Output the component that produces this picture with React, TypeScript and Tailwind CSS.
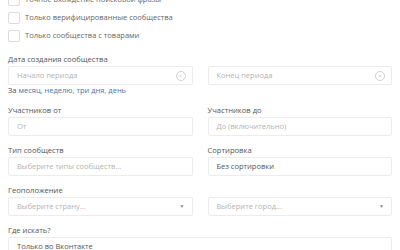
const Checkbox = ({ label }: { label: string }) => (
  <label className="flex h-[12px] items-center gap-[5px]">
    <span className="h-[12px] w-[12px] shrink-0 rounded-[2px] border border-[#dcdcdc] bg-white" />
    <span className="text-[7.5px] text-[#666]">{label}</span>
  </label>
);

const Field = ({
  label,
  placeholder,
  value,
  clear,
  select,
}: {
  label?: string;
  placeholder?: string;
  value?: string;
  clear?: boolean;
  select?: boolean;
}) => (
  <div className="flex flex-col">
    <div className="flex h-[11px] items-center text-[7.6px] font-medium text-[#555]">{label ?? "\u00a0"}</div>
    <div className="mt-[1px] flex h-[19px] items-center justify-between rounded-[2px] border border-[#ececec] bg-white pl-[8px] pr-[6px]">
      {value ? (
        <span className="text-[7.5px] text-[#555]">{value}</span>
      ) : (
        <span className="text-[7.5px] text-[#b3b3b3]">{placeholder}</span>
      )}
      {clear ? (
        <span className="flex h-[10px] w-[10px] items-center justify-center rounded-full border border-[#d0d0d0] text-[6px] leading-none text-[#c8c8c8]">
          ×
        </span>
      ) : null}
      {select ? <span className="mr-[1px] text-[5px] text-[#888]">▼</span> : null}
    </div>
  </div>
);

export default function App() {
  return (
    <div className="h-[250px] w-[400px] overflow-hidden bg-white font-['Open_Sans',sans-serif]">
      <div className="-mt-[6px] px-[8px]">
        <div className="flex flex-col gap-[6px]">
          <Checkbox label="Точное вхождение поисковой фразы" />
          <Checkbox label="Только верифицированные сообщества" />
          <Checkbox label="Только сообщества с товарами" />
        </div>

        <div className="mt-[12px] grid grid-cols-2 gap-x-[15px]">
          <Field label="Дата создания сообщества" placeholder="Начало периода" clear />
          <Field placeholder="Конец периода" clear />
        </div>
        <div className="flex h-[11px] items-center text-[7.5px] text-[#555]">
          За&nbsp;
          <span className="text-[#4a76a8]">месяц, неделю, три дня, день</span>
        </div>

        <div className="mt-[9px] grid grid-cols-2 gap-x-[15px] gap-y-[9px]">
          <Field label="Участников от" placeholder="От" />
          <Field label="Участников до" placeholder="До (включительно)" />
          <Field label="Тип сообществ" placeholder="Выберите типы сообществ..." />
          <Field label="Сортировка" value="Без сортировки" />
          <Field label="Геоположение" placeholder="Выберите страну..." select />
          <Field placeholder="Выберите город..." select />
        </div>

        <div className="mt-[9px]">
          <Field label="Где искать?" value="Только во Вконтакте" />
        </div>
      </div>
    </div>
  );
}
